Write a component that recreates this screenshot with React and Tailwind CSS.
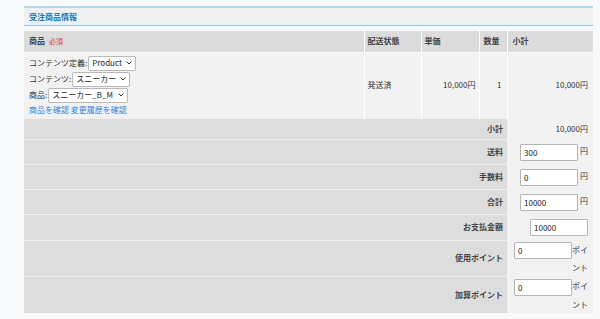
import { useState } from "react";

const FONT = { fontFamily: '"Noto Sans CJK JP", "Noto Sans", sans-serif' };

function FakeSelect({ value, width }) {
  return (
    <div
      className={`inline-flex h-[15px] items-center justify-between rounded-[2px] border border-[#b8b8b8] bg-white pl-[3px] pr-[3px] text-[8px] text-[#222] ${width}`}
    >
      <span className="overflow-hidden whitespace-nowrap">{value}</span>
      <svg width="6" height="4" viewBox="0 0 6 4" className="ml-[2px] shrink-0">
        <path d="M0.6 0.6 L3 3 L5.4 0.6" fill="none" stroke="#333" strokeWidth="1" />
      </svg>
    </div>
  );
}

function NumInput({ value, width = "w-[58px]" }) {
  const [v, setV] = useState(value);
  return (
    <input
      value={v}
      onChange={(e) => setV(e.target.value)}
      className={`h-[17px] ${width} rounded-[1px] border border-[#b5b5b5] bg-white px-[3px] align-middle text-[8px] text-[#222] outline-none`}
    />
  );
}

export default function App() {
  const summary = [
    { label: "小計", h: "h-[21px]", value: <span>10,000円</span> },
    { label: "送料", h: "h-[25px]", value: <><NumInput value="300" /><span className="ml-[2px]">円</span></> },
    { label: "手数料", h: "h-[25px]", value: <><NumInput value="0" /><span className="ml-[2px]">円</span></> },
    { label: "合計", h: "h-[25px]", value: <><NumInput value="10000" /><span className="ml-[2px]">円</span></> },
    { label: "お支払金額", h: "h-[26px]", value: <NumInput value="10000" /> },
    { label: "使用ポイント", h: "h-[36px]", value: <><NumInput value="0" /><span>ポイント</span></> },
    { label: "加算ポイント", h: "h-[37px]", value: <><NumInput value="0" /><span>ポイント</span></> },
  ];

  return (
    <div className="min-h-[319px] bg-[#f8f9fb] pl-[24px] pr-[7px] pt-[6px]" style={FONT}>
      <div className="border-t-2 border-b border-t-[#acd8f0] border-b-[#8cc8ea] bg-[#f0f0f0] px-[5px] py-[2px]">
        <h2 className="text-[8px] font-bold leading-[13px] text-[#2478b4]">受注商品情報</h2>
      </div>

      <table className="mt-[5px] w-full border-collapse text-[8px] text-[#333]">
        <thead>
          <tr className="h-[21px] bg-[#dcdcdc] text-left text-[#444]">
            <th className="border-r border-white pl-[5px] font-bold">
              商品<span className="ml-[4px] text-[7px] font-normal text-[#e53935]">必須</span>
            </th>
            <th className="w-[57px] border-r border-white pl-[3px] font-bold">配送状態</th>
            <th className="w-[58px] border-r border-white pl-[3px] font-bold">単価</th>
            <th className="w-[28px] border-r border-white pl-[4px] font-bold">数量</th>
            <th className="w-[86px] pl-[5px] font-bold">小計</th>
          </tr>
        </thead>
        <tbody>
          <tr className="h-[66px] border-t border-white bg-[#f2f2f2]">
            <td className="border-r border-white px-[5px] py-[3px] align-middle">
              <div className="flex flex-col gap-[1px]">
                <div className="flex items-center">
                  <span>コンテンツ定義:</span>
                  <span className="ml-[1px]"><FakeSelect value="Product" width="w-[48px]" /></span>
                </div>
                <div className="flex items-center">
                  <span>コンテンツ:</span>
                  <span className="ml-[1px]"><FakeSelect value="スニーカー" width="w-[58px]" /></span>
                </div>
                <div className="flex items-center">
                  <span>商品:</span>
                  <span className="ml-[1px]"><FakeSelect value="スニーカー_B_M" width="w-[80px]" /></span>
                </div>
                <div className="leading-[11px] text-[#3b7dd8]">
                  <a href="#">商品を確認</a> <a href="#">変更履歴を確認</a>
                </div>
              </div>
            </td>
            <td className="border-r border-white pl-[3px]">発送済</td>
            <td className="border-r border-white pr-[3px] text-right">10,000円</td>
            <td className="border-r border-white pr-[5px] text-right">1</td>
            <td className="pr-[5px] text-right">10,000円</td>
          </tr>
          {summary.map((row) => (
            <tr key={row.label} className={`${row.h} border-t border-[#f0f0f0]`}>
              <td colSpan={4} className="bg-[#dddddd] pr-[4px] text-right font-bold text-[#444]">
                {row.label}
              </td>
              <td className="bg-[#f2f2f2] pl-[6px] pr-[5px] text-right leading-[17px]">{row.value}</td>
            </tr>
          ))}
        </tbody>
      </table>
    </div>
  );
}
